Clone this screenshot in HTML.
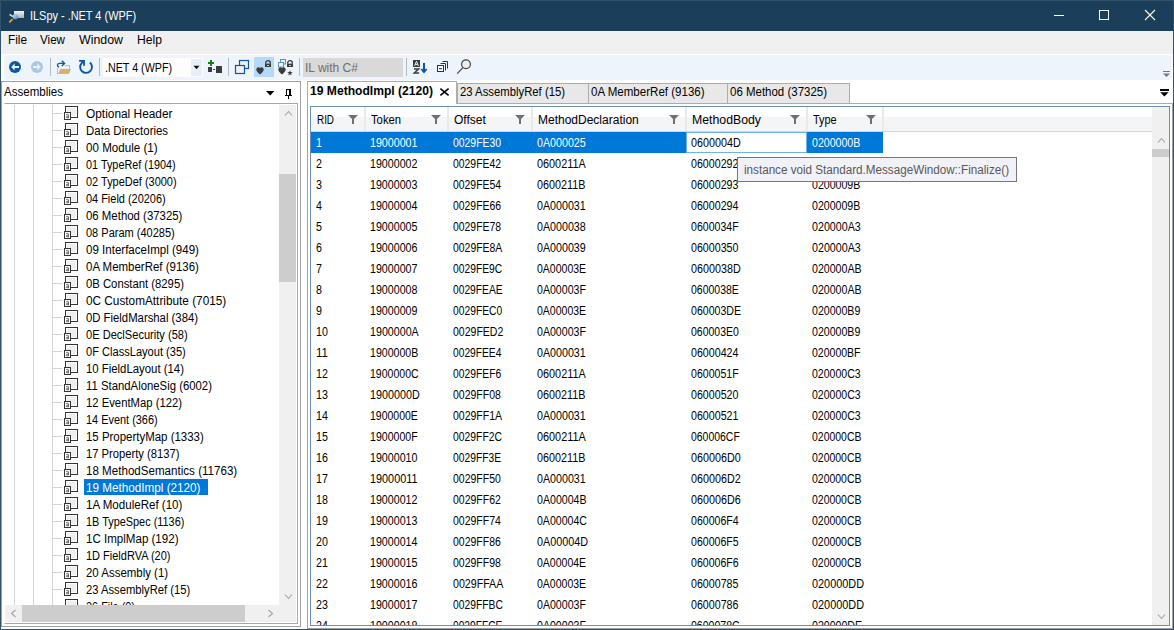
<!DOCTYPE html>
<html><head><meta charset="utf-8"><style>
html,body{margin:0;padding:0;width:1174px;height:630px;overflow:hidden;background:#fff;}
body{position:relative;font-family:"Liberation Sans",sans-serif;font-size:12px;}
.a{position:absolute;}
.t{white-space:pre;}
.ic{width:15px;height:14px;}
.ic i{position:absolute;left:1px;top:0;width:12px;height:11px;border:1px solid #222;box-sizing:border-box;background:#eeeef0;}
.ic b{position:absolute;left:0;top:6px;width:7px;height:8px;border:1px solid #222;box-sizing:border-box;background:#fff;}
</style></head><body>
<div class="a" style="left:0px;top:0px;width:1174px;height:31px;background:#1b3f5a;"></div>
<div class="a t" style="left:30px;top:7.84px;line-height:16px;color:#fff;transform:scaleX(0.9105);transform-origin:0 0;">ILSpy - .NET 4 (WPF)</div>
<div class="a" style="left:1054px;top:15px;width:10px;height:1px;background:#fff;"></div>
<div class="a" style="left:1099px;top:10px;width:10px;height:10px;border:1px solid #fff;box-sizing:border-box;"></div>
<svg class="a" style="left:1144px;top:9px" width="12" height="12"><path d="M1 1L11 11M11 1L1 11" stroke="#fff" stroke-width="1.1"/></svg>
<div class="a" style="left:1px;top:31px;width:1172px;height:23px;background:#f0f0f0;"></div>
<div class="a t" style="left:8px;top:31.84px;line-height:16px;color:#000;transform:scaleX(0.9822);transform-origin:0 0;">File</div>
<div class="a t" style="left:40px;top:31.84px;line-height:16px;color:#000;transform:scaleX(0.9691);transform-origin:0 0;">View</div>
<div class="a t" style="left:79px;top:31.84px;line-height:16px;color:#000;transform:scaleX(1.0307);transform-origin:0 0;">Window</div>
<div class="a t" style="left:137px;top:31.84px;line-height:16px;color:#000;transform:scaleX(1.0127);transform-origin:0 0;">Help</div>
<div class="a" style="left:4px;top:55px;width:1168px;height:25px;background:#eef4fc;border-radius:3px;"></div>
<svg class="a" style="left:8px;top:10px" width="18" height="14"><defs><linearGradient id="tg" x1="0" y1="0" x2="0" y2="1"><stop offset="0" stop-color="#f4f4f6"/><stop offset="1" stop-color="#a8adb6"/></linearGradient><linearGradient id="lg" x1="0" y1="0" x2="1" y2="1"><stop offset="0" stop-color="#b8e4fa"/><stop offset="1" stop-color="#5a84d0"/></linearGradient></defs><rect x="6" y="1" width="10" height="7" fill="url(#tg)"/><path d="M1.6 4.4L4.8 6.6" stroke="#e0e0e0" stroke-width="1.6"/><circle cx="7.4" cy="6.6" r="2.7" fill="url(#lg)"/><path d="M1.3 12.3L4.6 9.1" stroke="#f0a020" stroke-width="1.8"/></svg>
<div class="a" style="left:50px;top:58px;width:1px;height:18px;background:#b4bac2;"></div>
<div class="a" style="left:99px;top:58px;width:1px;height:18px;background:#b4bac2;"></div>
<div class="a" style="left:228px;top:58px;width:1px;height:18px;background:#b4bac2;"></div>
<div class="a" style="left:299px;top:58px;width:1px;height:18px;background:#b4bac2;"></div>
<div class="a" style="left:406px;top:58px;width:1px;height:18px;background:#b4bac2;"></div>
<svg class="a" style="left:8px;top:60px" width="14" height="14"><circle cx="7" cy="7" r="6" fill="#0c57a5"/><path d="M3.2 7L6.6 3.6V5.9H11V8.1H6.6V10.4Z" fill="#f2f2f2"/></svg>
<svg class="a" style="left:30px;top:60px" width="14" height="14"><circle cx="7" cy="7" r="6" fill="#a8c8e6"/><path d="M10.8 7L7.4 3.6V5.9H3V8.1H7.4V10.4Z" fill="#f2f2f2"/></svg>
<svg class="a" style="left:56px;top:59px" width="17" height="16"><rect x="1" y="9" width="1" height="6" fill="#dcb67a"/><rect x="9" y="6" width="5" height="1" fill="#dcb67a"/><rect x="13" y="6" width="1" height="4" fill="#dcb67a"/><rect x="2" y="7" width="11" height="3" fill="#f3f0ea"/><path d="M4.2 10H15L12.9 14.8H2.3Z" fill="#d9b070"/><rect x="1" y="14" width="12" height="1" fill="#dcb67a"/><path d="M2.9 8.2C0.9 7.6 0.8 4.6 3.6 4.4H8.6" stroke="#0e5aa8" stroke-width="1.4" fill="none"/><path d="M5.8 1.8L8.6 4.4L5.8 7.1" stroke="#0e5aa8" stroke-width="1.4" fill="none"/></svg>
<svg class="a" style="left:78px;top:59px" width="16" height="16"><path d="M11.9 3.5A5.9 5.9 0 1 1 3.9 3.8L5.6 2.3" stroke="#0c57a5" stroke-width="1.9" fill="none"/><path d="M1.1 1.9H6V6.8" stroke="#0c57a5" stroke-width="1.8" fill="none"/></svg>
<div class="a" style="left:103px;top:58px;width:100px;height:19px;background:#fdfdfe;"></div>
<div class="a" style="left:191px;top:59px;width:11px;height:17px;background:#e7eef7;"></div>
<svg class="a" style="left:193px;top:65px" width="7" height="5"><path d="M0.5 0.8H6.5L3.5 4.2Z" fill="#111"/></svg>
<div class="a t" style="left:105px;top:59.84px;line-height:16px;color:#000;transform:scaleX(0.8922);transform-origin:0 0;">.NET 4 (WPF)</div>
<svg class="a" style="left:207px;top:59px" width="16" height="15"><path d="M3 1H5V3H7V5H5V7H3V5H1V3H3Z" fill="#1a7d1a"/><rect x="1" y="8" width="4" height="5" fill="#3c3c3c"/><rect x="6" y="10" width="2" height="1" fill="#3c3c3c"/><rect x="9" y="7" width="6" height="7" fill="#3c3c3c"/></svg>
<svg class="a" style="left:234px;top:59px" width="16" height="16"><rect x="5.5" y="1.5" width="9" height="8" fill="#f0f0f0" stroke="#0c57a5" stroke-width="1.2"/><rect x="1.5" y="6.5" width="9" height="8" fill="#f0f0f0" stroke="#0c57a5" stroke-width="1.2"/></svg>
<div class="a" style="left:254px;top:57px;width:20px;height:20px;background:#b7d9f9;"></div>
<svg class="a" style="left:256px;top:67px" width="8" height="8"><path d="M4 7.5C2.6 6.3 0.3 4.9 0.3 2.6C0.3 1.3 1.2 0.3 2.3 0.3C3.1 0.3 3.7 0.8 4 1.3C4.3 0.8 4.9 0.3 5.7 0.3C6.8 0.3 7.7 1.3 7.7 2.6C7.7 4.9 5.4 6.3 4 7.5Z" fill="#3c3c3c"/></svg>
<svg class="a" style="left:264px;top:60px" width="8" height="8"><path d="M1.65 3.8V3A2.35 2.35 0 0 1 6.35 3V3.8" stroke="#3c3c3c" stroke-width="1.3" fill="none"/><rect x="1" y="3.6" width="6" height="3.4" fill="#3c3c3c"/><rect x="3" y="5.1" width="2" height="0.9" fill="#ddd"/></svg>
<svg class="a" style="left:278px;top:58px" width="9" height="10"><rect x="2.5" y="1.5" width="5" height="4.5" fill="#e8eef6" stroke="#5b93c7"/><rect x="0.5" y="4.5" width="5" height="4.5" fill="#f4f4f4" stroke="#5b93c7"/></svg>
<svg class="a" style="left:278px;top:67px" width="8" height="8"><path d="M4 7.5C2.6 6.3 0.3 4.9 0.3 2.6C0.3 1.3 1.2 0.3 2.3 0.3C3.1 0.3 3.7 0.8 4 1.3C4.3 0.8 4.9 0.3 5.7 0.3C6.8 0.3 7.7 1.3 7.7 2.6C7.7 4.9 5.4 6.3 4 7.5Z" fill="#3c3c3c"/></svg>
<svg class="a" style="left:286px;top:60px" width="8" height="8"><path d="M1.65 3.8V3A2.35 2.35 0 0 1 6.35 3V3.8" stroke="#3c3c3c" stroke-width="1.3" fill="none"/><rect x="1" y="3.6" width="6" height="3.4" fill="#3c3c3c"/><rect x="3" y="5.1" width="2" height="0.9" fill="#ddd"/></svg>
<svg class="a" style="left:287px;top:69.5px" width="6" height="6"><path d="M3 0.2L3.7 2.1H5.8L4.1 3.3L4.7 5.4L3 4.2L1.3 5.4L1.9 3.3L0.2 2.1H2.3Z" fill="#3c3c3c"/></svg>
<div class="a" style="left:303px;top:58px;width:100px;height:19px;background:#d9d9d9;"></div>
<div class="a t" style="left:305px;top:59.84px;line-height:16px;color:#6e6e6e;">IL with C#</div>
<svg class="a" style="left:412px;top:59px" width="17" height="16"><rect x="1" y="1" width="7" height="7" fill="#3c3c3c"/><path d="M2.6 7L4.5 2.2L6.4 7M3.2 5.4H5.8" stroke="#eee" stroke-width="1" fill="none"/><path d="M2 10.1H6.6L2.3 14H7.1" stroke="#3c3c3c" stroke-width="1.5" fill="none"/><path d="M12 4V13" stroke="#0c57a5" stroke-width="2"/><path d="M9.3 10L12 13.2L14.7 10" stroke="#0c57a5" stroke-width="1.8" fill="none"/></svg>
<svg class="a" style="left:436px;top:60px" width="14" height="13"><path d="M6.5 1.5H11.5V8.5" stroke="#333" stroke-width="1" fill="none"/><path d="M4.5 3.5H9.5V10.5" stroke="#333" stroke-width="1" fill="none"/><rect x="1.5" y="5.5" width="6" height="6" fill="#fff" stroke="#333"/><rect x="3" y="8" width="3" height="1.2" fill="#0c57a5"/></svg>
<svg class="a" style="left:456px;top:59px" width="16" height="16"><circle cx="10" cy="5.3" r="4.4" fill="#eeeeee" stroke="#444" stroke-width="1.2"/><path d="M1.2 14.6L6.9 8.6" stroke="#444" stroke-width="1.2"/></svg>
<div class="a" style="left:1px;top:81px;width:300px;height:546px;border:1px solid #a0a0a0;box-sizing:border-box;"></div>
<div class="a t" style="left:4px;top:83.84px;line-height:16px;color:#000;transform:scaleX(0.9615);transform-origin:0 0;">Assemblies</div>
<div class="a" style="left:4px;top:103px;width:294px;height:521px;background:#fff;border:1px solid #a3a7ae;border-left-color:#fff;box-sizing:border-box;"></div>
<div class="a" style="left:307px;top:103px;width:866px;height:526px;border:1px solid #a0a0a0;box-sizing:border-box;"></div>
<div class="a" style="left:310px;top:106px;width:860px;height:520px;background:#fff;border:1px solid #6b8cb0;box-sizing:border-box;"></div>
<div class="a" style="left:457px;top:83px;width:132px;height:21px;background:#e8e8e8;border:1px solid #acacac;border-bottom:none;box-sizing:border-box;"></div>
<div class="a" style="left:588px;top:83px;width:140px;height:21px;background:#e8e8e8;border:1px solid #acacac;border-bottom:none;box-sizing:border-box;"></div>
<div class="a" style="left:727px;top:83px;width:123px;height:21px;background:#e8e8e8;border:1px solid #acacac;border-bottom:none;box-sizing:border-box;"></div>
<div class="a t" style="left:460px;top:83.84px;line-height:16px;color:#000;transform:scaleX(0.9428);transform-origin:0 0;">23 AssemblyRef (15)</div>
<div class="a t" style="left:591px;top:83.84px;line-height:16px;color:#000;transform:scaleX(0.9623);transform-origin:0 0;">0A MemberRef (9136)</div>
<div class="a t" style="left:730px;top:83.84px;line-height:16px;color:#000;transform:scaleX(0.9568);transform-origin:0 0;">06 Method (37325)</div>
<div class="a" style="left:457px;top:103px;width:716px;height:1px;background:#acacac;"></div>
<div class="a" style="left:307px;top:81px;width:150px;height:23px;background:#fff;border:1px solid #acacac;border-bottom:none;box-sizing:border-box;"></div>
<div class="a t" style="left:310.3px;top:82.84px;line-height:16px;color:#000;font-weight:bold;transform:scaleX(1.0082);transform-origin:0 0;">19 MethodImpl (2120)</div>
<svg class="a" style="left:439px;top:87px" width="11" height="10"><path d="M1.4 1.6L9.6 8.4M9.6 1.6L1.4 8.4" stroke="#000" stroke-width="1.6"/></svg>
<div class="a" style="left:311px;top:107px;width:841px;height:10px;background:#ffffff;"></div>
<div class="a" style="left:311px;top:117px;width:841px;height:14px;background:#f4f5f7;"></div>
<div class="a" style="left:311px;top:131px;width:841px;height:1px;background:#d5d5d5;"></div>
<div class="a" style="left:364px;top:107px;width:2px;height:24px;background:#e9e9e9;"></div>
<div class="a t" style="left:317px;top:111.84px;line-height:16px;color:#000;transform:scaleX(0.8224);transform-origin:0 0;">RID</div>
<svg class="a" style="left:348px;top:115px" width="10" height="9"><path d="M0 0H10L6 4V9H4V4Z" fill="#707070"/></svg>
<div class="a" style="left:447px;top:107px;width:2px;height:24px;background:#e9e9e9;"></div>
<div class="a t" style="left:371px;top:111.84px;line-height:16px;color:#000;transform:scaleX(0.9370);transform-origin:0 0;">Token</div>
<svg class="a" style="left:431px;top:115px" width="10" height="9"><path d="M0 0H10L6 4V9H4V4Z" fill="#707070"/></svg>
<div class="a" style="left:531px;top:107px;width:2px;height:24px;background:#e9e9e9;"></div>
<div class="a t" style="left:454px;top:111.84px;line-height:16px;color:#000;">Offset</div>
<svg class="a" style="left:515px;top:115px" width="10" height="9"><path d="M0 0H10L6 4V9H4V4Z" fill="#707070"/></svg>
<div class="a" style="left:685px;top:107px;width:2px;height:24px;background:#e9e9e9;"></div>
<div class="a t" style="left:538px;top:111.84px;line-height:16px;color:#000;">MethodDeclaration</div>
<svg class="a" style="left:669px;top:115px" width="10" height="9"><path d="M0 0H10L6 4V9H4V4Z" fill="#707070"/></svg>
<div class="a" style="left:806px;top:107px;width:2px;height:24px;background:#e9e9e9;"></div>
<div class="a t" style="left:692px;top:111.84px;line-height:16px;color:#000;transform:scaleX(1.0244);transform-origin:0 0;">MethodBody</div>
<svg class="a" style="left:790px;top:115px" width="10" height="9"><path d="M0 0H10L6 4V9H4V4Z" fill="#707070"/></svg>
<div class="a" style="left:882px;top:107px;width:2px;height:24px;background:#e9e9e9;"></div>
<div class="a t" style="left:813px;top:111.84px;line-height:16px;color:#000;transform:scaleX(0.9071);transform-origin:0 0;">Type</div>
<svg class="a" style="left:866px;top:115px" width="10" height="9"><path d="M0 0H10L6 4V9H4V4Z" fill="#707070"/></svg>
<div class="a" style="left:311px;top:132px;width:841px;height:493px;overflow:hidden">
<div class="a" style="left:0px;top:0px;width:375px;height:21px;background:#0078d7;"></div>
<div class="a" style="left:375px;top:0px;width:121px;height:21px;background:#fff;border:1px solid #6fb2ec;box-sizing:border-box;"></div>
<div class="a" style="left:496px;top:0px;width:76px;height:21px;background:#0078d7;"></div>
<div class="a t" style="left:4.5px;top:2.84px;line-height:16px;color:#fff;transform:scaleX(0.8888);transform-origin:0 0;">1</div>
<div class="a t" style="left:59.30000000000001px;top:2.84px;line-height:16px;color:#fff;transform:scaleX(0.8888);transform-origin:0 0;">19000001</div>
<div class="a t" style="left:142px;top:2.84px;line-height:16px;color:#fff;transform:scaleX(0.8667);transform-origin:0 0;">0029FE30</div>
<div class="a t" style="left:225.5px;top:2.84px;line-height:16px;color:#fff;transform:scaleX(0.8904);transform-origin:0 0;">0A000025</div>
<div class="a t" style="left:380px;top:2.84px;line-height:16px;color:#000;transform:scaleX(0.8977);transform-origin:0 0;">0600004D</div>
<div class="a t" style="left:501px;top:2.84px;line-height:16px;color:#fff;transform:scaleX(0.8831);transform-origin:0 0;">0200000B</div>
<div class="a t" style="left:4.5px;top:23.84px;line-height:16px;color:#000;transform:scaleX(0.8888);transform-origin:0 0;">2</div>
<div class="a t" style="left:59.30000000000001px;top:23.84px;line-height:16px;color:#000;transform:scaleX(0.8888);transform-origin:0 0;">19000002</div>
<div class="a t" style="left:142px;top:23.84px;line-height:16px;color:#000;transform:scaleX(0.8667);transform-origin:0 0;">0029FE42</div>
<div class="a t" style="left:225.5px;top:23.84px;line-height:16px;color:#000;transform:scaleX(0.9052);transform-origin:0 0;">0600211A</div>
<div class="a t" style="left:380px;top:23.84px;line-height:16px;color:#000;transform:scaleX(0.8888);transform-origin:0 0;">06000292</div>
<div class="a t" style="left:501px;top:23.84px;line-height:16px;color:#000;transform:scaleX(0.8831);transform-origin:0 0;">0200009B</div>
<div class="a t" style="left:4.5px;top:44.84px;line-height:16px;color:#000;transform:scaleX(0.8888);transform-origin:0 0;">3</div>
<div class="a t" style="left:59.30000000000001px;top:44.84px;line-height:16px;color:#000;transform:scaleX(0.8888);transform-origin:0 0;">19000003</div>
<div class="a t" style="left:142px;top:44.84px;line-height:16px;color:#000;transform:scaleX(0.8667);transform-origin:0 0;">0029FE54</div>
<div class="a t" style="left:225.5px;top:44.84px;line-height:16px;color:#000;transform:scaleX(0.8977);transform-origin:0 0;">0600211B</div>
<div class="a t" style="left:380px;top:44.84px;line-height:16px;color:#000;transform:scaleX(0.8888);transform-origin:0 0;">06000293</div>
<div class="a t" style="left:501px;top:44.84px;line-height:16px;color:#000;transform:scaleX(0.8831);transform-origin:0 0;">0200009B</div>
<div class="a t" style="left:4.5px;top:65.84px;line-height:16px;color:#000;transform:scaleX(0.8888);transform-origin:0 0;">4</div>
<div class="a t" style="left:59.30000000000001px;top:65.84px;line-height:16px;color:#000;transform:scaleX(0.8888);transform-origin:0 0;">19000004</div>
<div class="a t" style="left:142px;top:65.84px;line-height:16px;color:#000;transform:scaleX(0.8667);transform-origin:0 0;">0029FE66</div>
<div class="a t" style="left:225.5px;top:65.84px;line-height:16px;color:#000;transform:scaleX(0.8904);transform-origin:0 0;">0A000031</div>
<div class="a t" style="left:380px;top:65.84px;line-height:16px;color:#000;transform:scaleX(0.8888);transform-origin:0 0;">06000294</div>
<div class="a t" style="left:501px;top:65.84px;line-height:16px;color:#000;transform:scaleX(0.8831);transform-origin:0 0;">0200009B</div>
<div class="a t" style="left:4.5px;top:86.84px;line-height:16px;color:#000;transform:scaleX(0.8888);transform-origin:0 0;">5</div>
<div class="a t" style="left:59.30000000000001px;top:86.84px;line-height:16px;color:#000;transform:scaleX(0.8888);transform-origin:0 0;">19000005</div>
<div class="a t" style="left:142px;top:86.84px;line-height:16px;color:#000;transform:scaleX(0.8667);transform-origin:0 0;">0029FE78</div>
<div class="a t" style="left:225.5px;top:86.84px;line-height:16px;color:#000;transform:scaleX(0.8904);transform-origin:0 0;">0A000038</div>
<div class="a t" style="left:380px;top:86.84px;line-height:16px;color:#000;transform:scaleX(0.8812);transform-origin:0 0;">0600034F</div>
<div class="a t" style="left:501px;top:86.84px;line-height:16px;color:#000;transform:scaleX(0.8904);transform-origin:0 0;">020000A3</div>
<div class="a t" style="left:4.5px;top:107.84px;line-height:16px;color:#000;transform:scaleX(0.8888);transform-origin:0 0;">6</div>
<div class="a t" style="left:59.30000000000001px;top:107.84px;line-height:16px;color:#000;transform:scaleX(0.8888);transform-origin:0 0;">19000006</div>
<div class="a t" style="left:142px;top:107.84px;line-height:16px;color:#000;transform:scaleX(0.8688);transform-origin:0 0;">0029FE8A</div>
<div class="a t" style="left:225.5px;top:107.84px;line-height:16px;color:#000;transform:scaleX(0.8904);transform-origin:0 0;">0A000039</div>
<div class="a t" style="left:380px;top:107.84px;line-height:16px;color:#000;transform:scaleX(0.8888);transform-origin:0 0;">06000350</div>
<div class="a t" style="left:501px;top:107.84px;line-height:16px;color:#000;transform:scaleX(0.8904);transform-origin:0 0;">020000A3</div>
<div class="a t" style="left:4.5px;top:128.84px;line-height:16px;color:#000;transform:scaleX(0.8888);transform-origin:0 0;">7</div>
<div class="a t" style="left:59.30000000000001px;top:128.84px;line-height:16px;color:#000;transform:scaleX(0.8888);transform-origin:0 0;">19000007</div>
<div class="a t" style="left:142px;top:128.84px;line-height:16px;color:#000;transform:scaleX(0.8569);transform-origin:0 0;">0029FE9C</div>
<div class="a t" style="left:225.5px;top:128.84px;line-height:16px;color:#000;transform:scaleX(0.8759);transform-origin:0 0;">0A00003E</div>
<div class="a t" style="left:380px;top:128.84px;line-height:16px;color:#000;transform:scaleX(0.8977);transform-origin:0 0;">0600038D</div>
<div class="a t" style="left:501px;top:128.84px;line-height:16px;color:#000;transform:scaleX(0.8849);transform-origin:0 0;">020000AB</div>
<div class="a t" style="left:4.5px;top:149.84px;line-height:16px;color:#000;transform:scaleX(0.8888);transform-origin:0 0;">8</div>
<div class="a t" style="left:59.30000000000001px;top:149.84px;line-height:16px;color:#000;transform:scaleX(0.8888);transform-origin:0 0;">19000008</div>
<div class="a t" style="left:142px;top:149.84px;line-height:16px;color:#000;transform:scaleX(0.8553);transform-origin:0 0;">0029FEAE</div>
<div class="a t" style="left:225.5px;top:149.84px;line-height:16px;color:#000;transform:scaleX(0.8830);transform-origin:0 0;">0A00003F</div>
<div class="a t" style="left:380px;top:149.84px;line-height:16px;color:#000;transform:scaleX(0.8740);transform-origin:0 0;">0600038E</div>
<div class="a t" style="left:501px;top:149.84px;line-height:16px;color:#000;transform:scaleX(0.8849);transform-origin:0 0;">020000AB</div>
<div class="a t" style="left:4.5px;top:170.84px;line-height:16px;color:#000;transform:scaleX(0.8888);transform-origin:0 0;">9</div>
<div class="a t" style="left:59.30000000000001px;top:170.84px;line-height:16px;color:#000;transform:scaleX(0.8888);transform-origin:0 0;">19000009</div>
<div class="a t" style="left:142px;top:170.84px;line-height:16px;color:#000;transform:scaleX(0.8569);transform-origin:0 0;">0029FEC0</div>
<div class="a t" style="left:225.5px;top:170.84px;line-height:16px;color:#000;transform:scaleX(0.8759);transform-origin:0 0;">0A00003E</div>
<div class="a t" style="left:380px;top:170.84px;line-height:16px;color:#000;transform:scaleX(0.8832);transform-origin:0 0;">060003DE</div>
<div class="a t" style="left:501px;top:170.84px;line-height:16px;color:#000;transform:scaleX(0.8831);transform-origin:0 0;">020000B9</div>
<div class="a t" style="left:4.5px;top:191.84px;line-height:16px;color:#000;transform:scaleX(0.8888);transform-origin:0 0;">10</div>
<div class="a t" style="left:59.30000000000001px;top:191.84px;line-height:16px;color:#000;transform:scaleX(0.8904);transform-origin:0 0;">1900000A</div>
<div class="a t" style="left:142px;top:191.84px;line-height:16px;color:#000;transform:scaleX(0.8761);transform-origin:0 0;">0029FED2</div>
<div class="a t" style="left:225.5px;top:191.84px;line-height:16px;color:#000;transform:scaleX(0.8830);transform-origin:0 0;">0A00003F</div>
<div class="a t" style="left:380px;top:191.84px;line-height:16px;color:#000;transform:scaleX(0.8740);transform-origin:0 0;">060003E0</div>
<div class="a t" style="left:501px;top:191.84px;line-height:16px;color:#000;transform:scaleX(0.8831);transform-origin:0 0;">020000B9</div>
<div class="a t" style="left:4.5px;top:212.84px;line-height:16px;color:#000;transform:scaleX(0.9524);transform-origin:0 0;">11</div>
<div class="a t" style="left:59.30000000000001px;top:212.84px;line-height:16px;color:#000;transform:scaleX(0.8831);transform-origin:0 0;">1900000B</div>
<div class="a t" style="left:142px;top:212.84px;line-height:16px;color:#000;transform:scaleX(0.8529);transform-origin:0 0;">0029FEE4</div>
<div class="a t" style="left:225.5px;top:212.84px;line-height:16px;color:#000;transform:scaleX(0.8904);transform-origin:0 0;">0A000031</div>
<div class="a t" style="left:380px;top:212.84px;line-height:16px;color:#000;transform:scaleX(0.8888);transform-origin:0 0;">06000424</div>
<div class="a t" style="left:501px;top:212.84px;line-height:16px;color:#000;transform:scaleX(0.8757);transform-origin:0 0;">020000BF</div>
<div class="a t" style="left:4.5px;top:233.84px;line-height:16px;color:#000;transform:scaleX(0.8888);transform-origin:0 0;">12</div>
<div class="a t" style="left:59.30000000000001px;top:233.84px;line-height:16px;color:#000;transform:scaleX(0.8778);transform-origin:0 0;">1900000C</div>
<div class="a t" style="left:142px;top:233.84px;line-height:16px;color:#000;transform:scaleX(0.8596);transform-origin:0 0;">0029FEF6</div>
<div class="a t" style="left:225.5px;top:233.84px;line-height:16px;color:#000;transform:scaleX(0.9052);transform-origin:0 0;">0600211A</div>
<div class="a t" style="left:380px;top:233.84px;line-height:16px;color:#000;transform:scaleX(0.8812);transform-origin:0 0;">0600051F</div>
<div class="a t" style="left:501px;top:233.84px;line-height:16px;color:#000;transform:scaleX(0.8778);transform-origin:0 0;">020000C3</div>
<div class="a t" style="left:4.5px;top:254.84px;line-height:16px;color:#000;transform:scaleX(0.8888);transform-origin:0 0;">13</div>
<div class="a t" style="left:59.30000000000001px;top:254.84px;line-height:16px;color:#000;transform:scaleX(0.8977);transform-origin:0 0;">1900000D</div>
<div class="a t" style="left:142px;top:254.84px;line-height:16px;color:#000;transform:scaleX(0.8737);transform-origin:0 0;">0029FF08</div>
<div class="a t" style="left:225.5px;top:254.84px;line-height:16px;color:#000;transform:scaleX(0.8977);transform-origin:0 0;">0600211B</div>
<div class="a t" style="left:380px;top:254.84px;line-height:16px;color:#000;transform:scaleX(0.8888);transform-origin:0 0;">06000520</div>
<div class="a t" style="left:501px;top:254.84px;line-height:16px;color:#000;transform:scaleX(0.8778);transform-origin:0 0;">020000C3</div>
<div class="a t" style="left:4.5px;top:275.84px;line-height:16px;color:#000;transform:scaleX(0.8888);transform-origin:0 0;">14</div>
<div class="a t" style="left:59.30000000000001px;top:275.84px;line-height:16px;color:#000;transform:scaleX(0.8740);transform-origin:0 0;">1900000E</div>
<div class="a t" style="left:142px;top:275.84px;line-height:16px;color:#000;transform:scaleX(0.8756);transform-origin:0 0;">0029FF1A</div>
<div class="a t" style="left:225.5px;top:275.84px;line-height:16px;color:#000;transform:scaleX(0.8904);transform-origin:0 0;">0A000031</div>
<div class="a t" style="left:380px;top:275.84px;line-height:16px;color:#000;transform:scaleX(0.8888);transform-origin:0 0;">06000521</div>
<div class="a t" style="left:501px;top:275.84px;line-height:16px;color:#000;transform:scaleX(0.8778);transform-origin:0 0;">020000C3</div>
<div class="a t" style="left:4.5px;top:296.84px;line-height:16px;color:#000;transform:scaleX(0.8888);transform-origin:0 0;">15</div>
<div class="a t" style="left:59.30000000000001px;top:296.84px;line-height:16px;color:#000;transform:scaleX(0.8812);transform-origin:0 0;">1900000F</div>
<div class="a t" style="left:142px;top:296.84px;line-height:16px;color:#000;transform:scaleX(0.8635);transform-origin:0 0;">0029FF2C</div>
<div class="a t" style="left:225.5px;top:296.84px;line-height:16px;color:#000;transform:scaleX(0.9052);transform-origin:0 0;">0600211A</div>
<div class="a t" style="left:380px;top:296.84px;line-height:16px;color:#000;transform:scaleX(0.8706);transform-origin:0 0;">060006CF</div>
<div class="a t" style="left:501px;top:296.84px;line-height:16px;color:#000;transform:scaleX(0.8726);transform-origin:0 0;">020000CB</div>
<div class="a t" style="left:4.5px;top:317.84px;line-height:16px;color:#000;transform:scaleX(0.8888);transform-origin:0 0;">16</div>
<div class="a t" style="left:59.30000000000001px;top:317.84px;line-height:16px;color:#000;transform:scaleX(0.8888);transform-origin:0 0;">19000010</div>
<div class="a t" style="left:142px;top:317.84px;line-height:16px;color:#000;transform:scaleX(0.8596);transform-origin:0 0;">0029FF3E</div>
<div class="a t" style="left:225.5px;top:317.84px;line-height:16px;color:#000;transform:scaleX(0.8977);transform-origin:0 0;">0600211B</div>
<div class="a t" style="left:380px;top:317.84px;line-height:16px;color:#000;transform:scaleX(0.8977);transform-origin:0 0;">060006D0</div>
<div class="a t" style="left:501px;top:317.84px;line-height:16px;color:#000;transform:scaleX(0.8726);transform-origin:0 0;">020000CB</div>
<div class="a t" style="left:4.5px;top:338.84px;line-height:16px;color:#000;transform:scaleX(0.8888);transform-origin:0 0;">17</div>
<div class="a t" style="left:59.30000000000001px;top:338.84px;line-height:16px;color:#000;transform:scaleX(0.9039);transform-origin:0 0;">19000011</div>
<div class="a t" style="left:142px;top:338.84px;line-height:16px;color:#000;transform:scaleX(0.8737);transform-origin:0 0;">0029FF50</div>
<div class="a t" style="left:225.5px;top:338.84px;line-height:16px;color:#000;transform:scaleX(0.8904);transform-origin:0 0;">0A000031</div>
<div class="a t" style="left:380px;top:338.84px;line-height:16px;color:#000;transform:scaleX(0.8977);transform-origin:0 0;">060006D2</div>
<div class="a t" style="left:501px;top:338.84px;line-height:16px;color:#000;transform:scaleX(0.8726);transform-origin:0 0;">020000CB</div>
<div class="a t" style="left:4.5px;top:359.84px;line-height:16px;color:#000;transform:scaleX(0.8888);transform-origin:0 0;">18</div>
<div class="a t" style="left:59.30000000000001px;top:359.84px;line-height:16px;color:#000;transform:scaleX(0.8888);transform-origin:0 0;">19000012</div>
<div class="a t" style="left:142px;top:359.84px;line-height:16px;color:#000;transform:scaleX(0.8737);transform-origin:0 0;">0029FF62</div>
<div class="a t" style="left:225.5px;top:359.84px;line-height:16px;color:#000;transform:scaleX(0.8849);transform-origin:0 0;">0A00004B</div>
<div class="a t" style="left:380px;top:359.84px;line-height:16px;color:#000;transform:scaleX(0.8977);transform-origin:0 0;">060006D6</div>
<div class="a t" style="left:501px;top:359.84px;line-height:16px;color:#000;transform:scaleX(0.8726);transform-origin:0 0;">020000CB</div>
<div class="a t" style="left:4.5px;top:380.84px;line-height:16px;color:#000;transform:scaleX(0.8888);transform-origin:0 0;">19</div>
<div class="a t" style="left:59.30000000000001px;top:380.84px;line-height:16px;color:#000;transform:scaleX(0.8888);transform-origin:0 0;">19000013</div>
<div class="a t" style="left:142px;top:380.84px;line-height:16px;color:#000;transform:scaleX(0.8737);transform-origin:0 0;">0029FF74</div>
<div class="a t" style="left:225.5px;top:380.84px;line-height:16px;color:#000;transform:scaleX(0.8797);transform-origin:0 0;">0A00004C</div>
<div class="a t" style="left:380px;top:380.84px;line-height:16px;color:#000;transform:scaleX(0.8812);transform-origin:0 0;">060006F4</div>
<div class="a t" style="left:501px;top:380.84px;line-height:16px;color:#000;transform:scaleX(0.8726);transform-origin:0 0;">020000CB</div>
<div class="a t" style="left:4.5px;top:401.84px;line-height:16px;color:#000;transform:scaleX(0.8888);transform-origin:0 0;">20</div>
<div class="a t" style="left:59.30000000000001px;top:401.84px;line-height:16px;color:#000;transform:scaleX(0.8888);transform-origin:0 0;">19000014</div>
<div class="a t" style="left:142px;top:401.84px;line-height:16px;color:#000;transform:scaleX(0.8737);transform-origin:0 0;">0029FF86</div>
<div class="a t" style="left:225.5px;top:401.84px;line-height:16px;color:#000;transform:scaleX(0.8991);transform-origin:0 0;">0A00004D</div>
<div class="a t" style="left:380px;top:401.84px;line-height:16px;color:#000;transform:scaleX(0.8812);transform-origin:0 0;">060006F5</div>
<div class="a t" style="left:501px;top:401.84px;line-height:16px;color:#000;transform:scaleX(0.8726);transform-origin:0 0;">020000CB</div>
<div class="a t" style="left:4.5px;top:422.84px;line-height:16px;color:#000;transform:scaleX(0.8888);transform-origin:0 0;">21</div>
<div class="a t" style="left:59.30000000000001px;top:422.84px;line-height:16px;color:#000;transform:scaleX(0.8888);transform-origin:0 0;">19000015</div>
<div class="a t" style="left:142px;top:422.84px;line-height:16px;color:#000;transform:scaleX(0.8737);transform-origin:0 0;">0029FF98</div>
<div class="a t" style="left:225.5px;top:422.84px;line-height:16px;color:#000;transform:scaleX(0.8759);transform-origin:0 0;">0A00004E</div>
<div class="a t" style="left:380px;top:422.84px;line-height:16px;color:#000;transform:scaleX(0.8812);transform-origin:0 0;">060006F6</div>
<div class="a t" style="left:501px;top:422.84px;line-height:16px;color:#000;transform:scaleX(0.8726);transform-origin:0 0;">020000CB</div>
<div class="a t" style="left:4.5px;top:443.84px;line-height:16px;color:#000;transform:scaleX(0.8888);transform-origin:0 0;">22</div>
<div class="a t" style="left:59.30000000000001px;top:443.84px;line-height:16px;color:#000;transform:scaleX(0.8888);transform-origin:0 0;">19000016</div>
<div class="a t" style="left:142px;top:443.84px;line-height:16px;color:#000;transform:scaleX(0.8877);transform-origin:0 0;">0029FFAA</div>
<div class="a t" style="left:225.5px;top:443.84px;line-height:16px;color:#000;transform:scaleX(0.8759);transform-origin:0 0;">0A00003E</div>
<div class="a t" style="left:380px;top:443.84px;line-height:16px;color:#000;transform:scaleX(0.8888);transform-origin:0 0;">06000785</div>
<div class="a t" style="left:501px;top:443.84px;line-height:16px;color:#000;transform:scaleX(0.9060);transform-origin:0 0;">020000DD</div>
<div class="a t" style="left:4.5px;top:464.84px;line-height:16px;color:#000;transform:scaleX(0.8888);transform-origin:0 0;">23</div>
<div class="a t" style="left:59.30000000000001px;top:464.84px;line-height:16px;color:#000;transform:scaleX(0.8888);transform-origin:0 0;">19000017</div>
<div class="a t" style="left:142px;top:464.84px;line-height:16px;color:#000;transform:scaleX(0.8587);transform-origin:0 0;">0029FFBC</div>
<div class="a t" style="left:225.5px;top:464.84px;line-height:16px;color:#000;transform:scaleX(0.8830);transform-origin:0 0;">0A00003F</div>
<div class="a t" style="left:380px;top:464.84px;line-height:16px;color:#000;transform:scaleX(0.8888);transform-origin:0 0;">06000786</div>
<div class="a t" style="left:501px;top:464.84px;line-height:16px;color:#000;transform:scaleX(0.9060);transform-origin:0 0;">020000DD</div>
<div class="a t" style="left:4.5px;top:485.84px;line-height:16px;color:#000;transform:scaleX(0.8888);transform-origin:0 0;">24</div>
<div class="a t" style="left:59.30000000000001px;top:485.84px;line-height:16px;color:#000;transform:scaleX(0.8888);transform-origin:0 0;">19000018</div>
<div class="a t" style="left:142px;top:485.84px;line-height:16px;color:#000;transform:scaleX(0.8501);transform-origin:0 0;">0029FFCE</div>
<div class="a t" style="left:225.5px;top:485.84px;line-height:16px;color:#000;transform:scaleX(0.8830);transform-origin:0 0;">0A00003F</div>
<div class="a t" style="left:380px;top:485.84px;line-height:16px;color:#000;transform:scaleX(0.8778);transform-origin:0 0;">0600078C</div>
<div class="a t" style="left:501px;top:485.84px;line-height:16px;color:#000;transform:scaleX(0.8832);transform-origin:0 0;">020000DE</div>
</div>
<div class="a" style="left:1152px;top:107px;width:17px;height:518px;background:#f0f0f0;"></div>
<div class="a" style="left:1152px;top:149px;width:17px;height:8px;background:#cdcdcd;"></div>
<svg class="a" style="left:1157px;top:137px" width="9" height="7"><path d="M1 5.5L4.5 1.5L8 5.5" stroke="#a3a3a3" stroke-width="1.1" fill="none"/></svg>
<svg class="a" style="left:1157px;top:613px" width="9" height="7"><path d="M1 1.5L4.5 5.5L8 1.5" stroke="#a3a3a3" stroke-width="1.1" fill="none"/></svg>
<div class="a" style="left:737px;top:157px;width:280px;height:25px;background:#f1f2f7;border:1px solid #767676;box-sizing:border-box;"></div>
<div class="a t" style="left:744px;top:161.84px;line-height:16px;color:#575757;transform:scaleX(0.9715);transform-origin:0 0;">instance void Standard.MessageWindow::Finalize()</div>
<div class="a" style="left:5px;top:104px;width:274px;height:501px;overflow:hidden">
<div class="a" style="left:9px;top:1px;width:1px;height:500px;background:#d4d4d4;"></div>
<div class="a" style="left:28px;top:1px;width:1px;height:500px;background:#d4d4d4;"></div>
<div class="a" style="left:47px;top:1px;width:1px;height:500px;background:#d4d4d4;"></div>
<div class="a" style="left:47px;top:9px;width:10px;height:1px;background:#d4d4d4;"></div>
<svg class="a" style="left:59px;top:2px" width="14" height="14"><rect x="1.5" y="0.5" width="12" height="11" fill="#fff" stroke="#333"/><rect x="3" y="2" width="9" height="8" fill="#eeeef2"/><rect x="0.5" y="6.5" width="6" height="7" fill="#fff" stroke="#333"/><path d="M2.2 8.6Q3.6 8.0 4.4 8.7V12.2M4.4 10.2Q2.2 9.9 2.2 11.2Q2.4 12.4 4.4 11.6" stroke="#444" stroke-width="0.8" fill="none"/></svg>
<div class="a t" style="left:80.8px;top:1.84px;line-height:16px;color:#000;transform:scaleX(0.9900);transform-origin:0 0;">Optional Header</div>
<div class="a" style="left:47px;top:26px;width:10px;height:1px;background:#d4d4d4;"></div>
<svg class="a" style="left:59px;top:19px" width="14" height="14"><rect x="1.5" y="0.5" width="12" height="11" fill="#fff" stroke="#333"/><rect x="3" y="2" width="9" height="8" fill="#eeeef2"/><rect x="0.5" y="6.5" width="6" height="7" fill="#fff" stroke="#333"/><path d="M2.2 8.6Q3.6 8.0 4.4 8.7V12.2M4.4 10.2Q2.2 9.9 2.2 11.2Q2.4 12.4 4.4 11.6" stroke="#444" stroke-width="0.8" fill="none"/></svg>
<div class="a t" style="left:80.8px;top:18.84px;line-height:16px;color:#000;transform:scaleX(0.9543);transform-origin:0 0;">Data Directories</div>
<div class="a" style="left:47px;top:43px;width:10px;height:1px;background:#d4d4d4;"></div>
<svg class="a" style="left:59px;top:36px" width="14" height="14"><rect x="1.5" y="0.5" width="12" height="11" fill="#fff" stroke="#333"/><rect x="3" y="2" width="9" height="8" fill="#eeeef2"/><rect x="0.5" y="6.5" width="6" height="7" fill="#fff" stroke="#333"/><path d="M2.2 8.6Q3.6 8.0 4.4 8.7V12.2M4.4 10.2Q2.2 9.9 2.2 11.2Q2.4 12.4 4.4 11.6" stroke="#444" stroke-width="0.8" fill="none"/></svg>
<div class="a t" style="left:80.8px;top:35.84px;line-height:16px;color:#000;transform:scaleX(0.9672);transform-origin:0 0;">00 Module (1)</div>
<div class="a" style="left:47px;top:60px;width:10px;height:1px;background:#d4d4d4;"></div>
<svg class="a" style="left:59px;top:53px" width="14" height="14"><rect x="1.5" y="0.5" width="12" height="11" fill="#fff" stroke="#333"/><rect x="3" y="2" width="9" height="8" fill="#eeeef2"/><rect x="0.5" y="6.5" width="6" height="7" fill="#fff" stroke="#333"/><path d="M2.2 8.6Q3.6 8.0 4.4 8.7V12.2M4.4 10.2Q2.2 9.9 2.2 11.2Q2.4 12.4 4.4 11.6" stroke="#444" stroke-width="0.8" fill="none"/></svg>
<div class="a t" style="left:80.8px;top:52.84px;line-height:16px;color:#000;transform:scaleX(0.9046);transform-origin:0 0;">01 TypeRef (1904)</div>
<div class="a" style="left:47px;top:77px;width:10px;height:1px;background:#d4d4d4;"></div>
<svg class="a" style="left:59px;top:70px" width="14" height="14"><rect x="1.5" y="0.5" width="12" height="11" fill="#fff" stroke="#333"/><rect x="3" y="2" width="9" height="8" fill="#eeeef2"/><rect x="0.5" y="6.5" width="6" height="7" fill="#fff" stroke="#333"/><path d="M2.2 8.6Q3.6 8.0 4.4 8.7V12.2M4.4 10.2Q2.2 9.9 2.2 11.2Q2.4 12.4 4.4 11.6" stroke="#444" stroke-width="0.8" fill="none"/></svg>
<div class="a t" style="left:80.8px;top:69.84px;line-height:16px;color:#000;transform:scaleX(0.9137);transform-origin:0 0;">02 TypeDef (3000)</div>
<div class="a" style="left:47px;top:94px;width:10px;height:1px;background:#d4d4d4;"></div>
<svg class="a" style="left:59px;top:87px" width="14" height="14"><rect x="1.5" y="0.5" width="12" height="11" fill="#fff" stroke="#333"/><rect x="3" y="2" width="9" height="8" fill="#eeeef2"/><rect x="0.5" y="6.5" width="6" height="7" fill="#fff" stroke="#333"/><path d="M2.2 8.6Q3.6 8.0 4.4 8.7V12.2M4.4 10.2Q2.2 9.9 2.2 11.2Q2.4 12.4 4.4 11.6" stroke="#444" stroke-width="0.8" fill="none"/></svg>
<div class="a t" style="left:80.8px;top:86.84px;line-height:16px;color:#000;transform:scaleX(0.9110);transform-origin:0 0;">04 Field (20206)</div>
<div class="a" style="left:47px;top:111px;width:10px;height:1px;background:#d4d4d4;"></div>
<svg class="a" style="left:59px;top:104px" width="14" height="14"><rect x="1.5" y="0.5" width="12" height="11" fill="#fff" stroke="#333"/><rect x="3" y="2" width="9" height="8" fill="#eeeef2"/><rect x="0.5" y="6.5" width="6" height="7" fill="#fff" stroke="#333"/><path d="M2.2 8.6Q3.6 8.0 4.4 8.7V12.2M4.4 10.2Q2.2 9.9 2.2 11.2Q2.4 12.4 4.4 11.6" stroke="#444" stroke-width="0.8" fill="none"/></svg>
<div class="a t" style="left:80.8px;top:103.84px;line-height:16px;color:#000;transform:scaleX(0.9509);transform-origin:0 0;">06 Method (37325)</div>
<div class="a" style="left:47px;top:128px;width:10px;height:1px;background:#d4d4d4;"></div>
<svg class="a" style="left:59px;top:121px" width="14" height="14"><rect x="1.5" y="0.5" width="12" height="11" fill="#fff" stroke="#333"/><rect x="3" y="2" width="9" height="8" fill="#eeeef2"/><rect x="0.5" y="6.5" width="6" height="7" fill="#fff" stroke="#333"/><path d="M2.2 8.6Q3.6 8.0 4.4 8.7V12.2M4.4 10.2Q2.2 9.9 2.2 11.2Q2.4 12.4 4.4 11.6" stroke="#444" stroke-width="0.8" fill="none"/></svg>
<div class="a t" style="left:80.8px;top:120.84px;line-height:16px;color:#000;transform:scaleX(0.9172);transform-origin:0 0;">08 Param (40285)</div>
<div class="a" style="left:47px;top:145px;width:10px;height:1px;background:#d4d4d4;"></div>
<svg class="a" style="left:59px;top:138px" width="14" height="14"><rect x="1.5" y="0.5" width="12" height="11" fill="#fff" stroke="#333"/><rect x="3" y="2" width="9" height="8" fill="#eeeef2"/><rect x="0.5" y="6.5" width="6" height="7" fill="#fff" stroke="#333"/><path d="M2.2 8.6Q3.6 8.0 4.4 8.7V12.2M4.4 10.2Q2.2 9.9 2.2 11.2Q2.4 12.4 4.4 11.6" stroke="#444" stroke-width="0.8" fill="none"/></svg>
<div class="a t" style="left:80.8px;top:137.84px;line-height:16px;color:#000;transform:scaleX(0.9620);transform-origin:0 0;">09 InterfaceImpl (949)</div>
<div class="a" style="left:47px;top:162px;width:10px;height:1px;background:#d4d4d4;"></div>
<svg class="a" style="left:59px;top:155px" width="14" height="14"><rect x="1.5" y="0.5" width="12" height="11" fill="#fff" stroke="#333"/><rect x="3" y="2" width="9" height="8" fill="#eeeef2"/><rect x="0.5" y="6.5" width="6" height="7" fill="#fff" stroke="#333"/><path d="M2.2 8.6Q3.6 8.0 4.4 8.7V12.2M4.4 10.2Q2.2 9.9 2.2 11.2Q2.4 12.4 4.4 11.6" stroke="#444" stroke-width="0.8" fill="none"/></svg>
<div class="a t" style="left:80.8px;top:154.84px;line-height:16px;color:#000;transform:scaleX(0.9564);transform-origin:0 0;">0A MemberRef (9136)</div>
<div class="a" style="left:47px;top:179px;width:10px;height:1px;background:#d4d4d4;"></div>
<svg class="a" style="left:59px;top:172px" width="14" height="14"><rect x="1.5" y="0.5" width="12" height="11" fill="#fff" stroke="#333"/><rect x="3" y="2" width="9" height="8" fill="#eeeef2"/><rect x="0.5" y="6.5" width="6" height="7" fill="#fff" stroke="#333"/><path d="M2.2 8.6Q3.6 8.0 4.4 8.7V12.2M4.4 10.2Q2.2 9.9 2.2 11.2Q2.4 12.4 4.4 11.6" stroke="#444" stroke-width="0.8" fill="none"/></svg>
<div class="a t" style="left:80.8px;top:171.84px;line-height:16px;color:#000;transform:scaleX(0.9411);transform-origin:0 0;">0B Constant (8295)</div>
<div class="a" style="left:47px;top:196px;width:10px;height:1px;background:#d4d4d4;"></div>
<svg class="a" style="left:59px;top:189px" width="14" height="14"><rect x="1.5" y="0.5" width="12" height="11" fill="#fff" stroke="#333"/><rect x="3" y="2" width="9" height="8" fill="#eeeef2"/><rect x="0.5" y="6.5" width="6" height="7" fill="#fff" stroke="#333"/><path d="M2.2 8.6Q3.6 8.0 4.4 8.7V12.2M4.4 10.2Q2.2 9.9 2.2 11.2Q2.4 12.4 4.4 11.6" stroke="#444" stroke-width="0.8" fill="none"/></svg>
<div class="a t" style="left:80.8px;top:188.84px;line-height:16px;color:#000;transform:scaleX(0.9825);transform-origin:0 0;">0C CustomAttribute (7015)</div>
<div class="a" style="left:47px;top:213px;width:10px;height:1px;background:#d4d4d4;"></div>
<svg class="a" style="left:59px;top:206px" width="14" height="14"><rect x="1.5" y="0.5" width="12" height="11" fill="#fff" stroke="#333"/><rect x="3" y="2" width="9" height="8" fill="#eeeef2"/><rect x="0.5" y="6.5" width="6" height="7" fill="#fff" stroke="#333"/><path d="M2.2 8.6Q3.6 8.0 4.4 8.7V12.2M4.4 10.2Q2.2 9.9 2.2 11.2Q2.4 12.4 4.4 11.6" stroke="#444" stroke-width="0.8" fill="none"/></svg>
<div class="a t" style="left:80.8px;top:205.84px;line-height:16px;color:#000;transform:scaleX(0.9434);transform-origin:0 0;">0D FieldMarshal (384)</div>
<div class="a" style="left:47px;top:230px;width:10px;height:1px;background:#d4d4d4;"></div>
<svg class="a" style="left:59px;top:223px" width="14" height="14"><rect x="1.5" y="0.5" width="12" height="11" fill="#fff" stroke="#333"/><rect x="3" y="2" width="9" height="8" fill="#eeeef2"/><rect x="0.5" y="6.5" width="6" height="7" fill="#fff" stroke="#333"/><path d="M2.2 8.6Q3.6 8.0 4.4 8.7V12.2M4.4 10.2Q2.2 9.9 2.2 11.2Q2.4 12.4 4.4 11.6" stroke="#444" stroke-width="0.8" fill="none"/></svg>
<div class="a t" style="left:80.8px;top:222.84px;line-height:16px;color:#000;transform:scaleX(0.9243);transform-origin:0 0;">0E DeclSecurity (58)</div>
<div class="a" style="left:47px;top:247px;width:10px;height:1px;background:#d4d4d4;"></div>
<svg class="a" style="left:59px;top:240px" width="14" height="14"><rect x="1.5" y="0.5" width="12" height="11" fill="#fff" stroke="#333"/><rect x="3" y="2" width="9" height="8" fill="#eeeef2"/><rect x="0.5" y="6.5" width="6" height="7" fill="#fff" stroke="#333"/><path d="M2.2 8.6Q3.6 8.0 4.4 8.7V12.2M4.4 10.2Q2.2 9.9 2.2 11.2Q2.4 12.4 4.4 11.6" stroke="#444" stroke-width="0.8" fill="none"/></svg>
<div class="a t" style="left:80.8px;top:239.84px;line-height:16px;color:#000;transform:scaleX(0.9238);transform-origin:0 0;">0F ClassLayout (35)</div>
<div class="a" style="left:47px;top:264px;width:10px;height:1px;background:#d4d4d4;"></div>
<svg class="a" style="left:59px;top:257px" width="14" height="14"><rect x="1.5" y="0.5" width="12" height="11" fill="#fff" stroke="#333"/><rect x="3" y="2" width="9" height="8" fill="#eeeef2"/><rect x="0.5" y="6.5" width="6" height="7" fill="#fff" stroke="#333"/><path d="M2.2 8.6Q3.6 8.0 4.4 8.7V12.2M4.4 10.2Q2.2 9.9 2.2 11.2Q2.4 12.4 4.4 11.6" stroke="#444" stroke-width="0.8" fill="none"/></svg>
<div class="a t" style="left:80.8px;top:256.84px;line-height:16px;color:#000;transform:scaleX(0.9470);transform-origin:0 0;">10 FieldLayout (14)</div>
<div class="a" style="left:47px;top:281px;width:10px;height:1px;background:#d4d4d4;"></div>
<svg class="a" style="left:59px;top:274px" width="14" height="14"><rect x="1.5" y="0.5" width="12" height="11" fill="#fff" stroke="#333"/><rect x="3" y="2" width="9" height="8" fill="#eeeef2"/><rect x="0.5" y="6.5" width="6" height="7" fill="#fff" stroke="#333"/><path d="M2.2 8.6Q3.6 8.0 4.4 8.7V12.2M4.4 10.2Q2.2 9.9 2.2 11.2Q2.4 12.4 4.4 11.6" stroke="#444" stroke-width="0.8" fill="none"/></svg>
<div class="a t" style="left:80.8px;top:273.84px;line-height:16px;color:#000;transform:scaleX(0.9454);transform-origin:0 0;">11 StandAloneSig (6002)</div>
<div class="a" style="left:47px;top:298px;width:10px;height:1px;background:#d4d4d4;"></div>
<svg class="a" style="left:59px;top:291px" width="14" height="14"><rect x="1.5" y="0.5" width="12" height="11" fill="#fff" stroke="#333"/><rect x="3" y="2" width="9" height="8" fill="#eeeef2"/><rect x="0.5" y="6.5" width="6" height="7" fill="#fff" stroke="#333"/><path d="M2.2 8.6Q3.6 8.0 4.4 8.7V12.2M4.4 10.2Q2.2 9.9 2.2 11.2Q2.4 12.4 4.4 11.6" stroke="#444" stroke-width="0.8" fill="none"/></svg>
<div class="a t" style="left:80.8px;top:290.84px;line-height:16px;color:#000;transform:scaleX(0.9409);transform-origin:0 0;">12 EventMap (122)</div>
<div class="a" style="left:47px;top:315px;width:10px;height:1px;background:#d4d4d4;"></div>
<svg class="a" style="left:59px;top:308px" width="14" height="14"><rect x="1.5" y="0.5" width="12" height="11" fill="#fff" stroke="#333"/><rect x="3" y="2" width="9" height="8" fill="#eeeef2"/><rect x="0.5" y="6.5" width="6" height="7" fill="#fff" stroke="#333"/><path d="M2.2 8.6Q3.6 8.0 4.4 8.7V12.2M4.4 10.2Q2.2 9.9 2.2 11.2Q2.4 12.4 4.4 11.6" stroke="#444" stroke-width="0.8" fill="none"/></svg>
<div class="a t" style="left:80.8px;top:307.84px;line-height:16px;color:#000;transform:scaleX(0.9099);transform-origin:0 0;">14 Event (366)</div>
<div class="a" style="left:47px;top:332px;width:10px;height:1px;background:#d4d4d4;"></div>
<svg class="a" style="left:59px;top:325px" width="14" height="14"><rect x="1.5" y="0.5" width="12" height="11" fill="#fff" stroke="#333"/><rect x="3" y="2" width="9" height="8" fill="#eeeef2"/><rect x="0.5" y="6.5" width="6" height="7" fill="#fff" stroke="#333"/><path d="M2.2 8.6Q3.6 8.0 4.4 8.7V12.2M4.4 10.2Q2.2 9.9 2.2 11.2Q2.4 12.4 4.4 11.6" stroke="#444" stroke-width="0.8" fill="none"/></svg>
<div class="a t" style="left:80.8px;top:324.84px;line-height:16px;color:#000;transform:scaleX(0.9540);transform-origin:0 0;">15 PropertyMap (1333)</div>
<div class="a" style="left:47px;top:349px;width:10px;height:1px;background:#d4d4d4;"></div>
<svg class="a" style="left:59px;top:342px" width="14" height="14"><rect x="1.5" y="0.5" width="12" height="11" fill="#fff" stroke="#333"/><rect x="3" y="2" width="9" height="8" fill="#eeeef2"/><rect x="0.5" y="6.5" width="6" height="7" fill="#fff" stroke="#333"/><path d="M2.2 8.6Q3.6 8.0 4.4 8.7V12.2M4.4 10.2Q2.2 9.9 2.2 11.2Q2.4 12.4 4.4 11.6" stroke="#444" stroke-width="0.8" fill="none"/></svg>
<div class="a t" style="left:80.8px;top:341.84px;line-height:16px;color:#000;transform:scaleX(0.9347);transform-origin:0 0;">17 Property (8137)</div>
<div class="a" style="left:47px;top:366px;width:10px;height:1px;background:#d4d4d4;"></div>
<svg class="a" style="left:59px;top:359px" width="14" height="14"><rect x="1.5" y="0.5" width="12" height="11" fill="#fff" stroke="#333"/><rect x="3" y="2" width="9" height="8" fill="#eeeef2"/><rect x="0.5" y="6.5" width="6" height="7" fill="#fff" stroke="#333"/><path d="M2.2 8.6Q3.6 8.0 4.4 8.7V12.2M4.4 10.2Q2.2 9.9 2.2 11.2Q2.4 12.4 4.4 11.6" stroke="#444" stroke-width="0.8" fill="none"/></svg>
<div class="a t" style="left:80.8px;top:358.84px;line-height:16px;color:#000;transform:scaleX(0.9661);transform-origin:0 0;">18 MethodSemantics (11763)</div>
<div class="a" style="left:47px;top:383px;width:10px;height:1px;background:#d4d4d4;"></div>
<svg class="a" style="left:59px;top:376px" width="14" height="14"><rect x="1.5" y="0.5" width="12" height="11" fill="#fff" stroke="#333"/><rect x="3" y="2" width="9" height="8" fill="#eeeef2"/><rect x="0.5" y="6.5" width="6" height="7" fill="#fff" stroke="#333"/><path d="M2.2 8.6Q3.6 8.0 4.4 8.7V12.2M4.4 10.2Q2.2 9.9 2.2 11.2Q2.4 12.4 4.4 11.6" stroke="#444" stroke-width="0.8" fill="none"/></svg>
<div class="a" style="left:79px;top:375px;width:124px;height:16px;background:#0078d7;"></div>
<div class="a t" style="left:80.8px;top:375.84px;line-height:16px;color:#fff;transform:scaleX(0.9755);transform-origin:0 0;">19 MethodImpl (2120)</div>
<div class="a" style="left:47px;top:400px;width:10px;height:1px;background:#d4d4d4;"></div>
<svg class="a" style="left:59px;top:393px" width="14" height="14"><rect x="1.5" y="0.5" width="12" height="11" fill="#fff" stroke="#333"/><rect x="3" y="2" width="9" height="8" fill="#eeeef2"/><rect x="0.5" y="6.5" width="6" height="7" fill="#fff" stroke="#333"/><path d="M2.2 8.6Q3.6 8.0 4.4 8.7V12.2M4.4 10.2Q2.2 9.9 2.2 11.2Q2.4 12.4 4.4 11.6" stroke="#444" stroke-width="0.8" fill="none"/></svg>
<div class="a t" style="left:80.8px;top:392.84px;line-height:16px;color:#000;transform:scaleX(0.9635);transform-origin:0 0;">1A ModuleRef (10)</div>
<div class="a" style="left:47px;top:417px;width:10px;height:1px;background:#d4d4d4;"></div>
<svg class="a" style="left:59px;top:410px" width="14" height="14"><rect x="1.5" y="0.5" width="12" height="11" fill="#fff" stroke="#333"/><rect x="3" y="2" width="9" height="8" fill="#eeeef2"/><rect x="0.5" y="6.5" width="6" height="7" fill="#fff" stroke="#333"/><path d="M2.2 8.6Q3.6 8.0 4.4 8.7V12.2M4.4 10.2Q2.2 9.9 2.2 11.2Q2.4 12.4 4.4 11.6" stroke="#444" stroke-width="0.8" fill="none"/></svg>
<div class="a t" style="left:80.8px;top:409.84px;line-height:16px;color:#000;transform:scaleX(0.9080);transform-origin:0 0;">1B TypeSpec (1136)</div>
<div class="a" style="left:47px;top:434px;width:10px;height:1px;background:#d4d4d4;"></div>
<svg class="a" style="left:59px;top:427px" width="14" height="14"><rect x="1.5" y="0.5" width="12" height="11" fill="#fff" stroke="#333"/><rect x="3" y="2" width="9" height="8" fill="#eeeef2"/><rect x="0.5" y="6.5" width="6" height="7" fill="#fff" stroke="#333"/><path d="M2.2 8.6Q3.6 8.0 4.4 8.7V12.2M4.4 10.2Q2.2 9.9 2.2 11.2Q2.4 12.4 4.4 11.6" stroke="#444" stroke-width="0.8" fill="none"/></svg>
<div class="a t" style="left:80.8px;top:426.84px;line-height:16px;color:#000;transform:scaleX(0.9632);transform-origin:0 0;">1C ImplMap (192)</div>
<div class="a" style="left:47px;top:451px;width:10px;height:1px;background:#d4d4d4;"></div>
<svg class="a" style="left:59px;top:444px" width="14" height="14"><rect x="1.5" y="0.5" width="12" height="11" fill="#fff" stroke="#333"/><rect x="3" y="2" width="9" height="8" fill="#eeeef2"/><rect x="0.5" y="6.5" width="6" height="7" fill="#fff" stroke="#333"/><path d="M2.2 8.6Q3.6 8.0 4.4 8.7V12.2M4.4 10.2Q2.2 9.9 2.2 11.2Q2.4 12.4 4.4 11.6" stroke="#444" stroke-width="0.8" fill="none"/></svg>
<div class="a t" style="left:80.8px;top:443.84px;line-height:16px;color:#000;transform:scaleX(0.9158);transform-origin:0 0;">1D FieldRVA (20)</div>
<div class="a" style="left:47px;top:468px;width:10px;height:1px;background:#d4d4d4;"></div>
<svg class="a" style="left:59px;top:461px" width="14" height="14"><rect x="1.5" y="0.5" width="12" height="11" fill="#fff" stroke="#333"/><rect x="3" y="2" width="9" height="8" fill="#eeeef2"/><rect x="0.5" y="6.5" width="6" height="7" fill="#fff" stroke="#333"/><path d="M2.2 8.6Q3.6 8.0 4.4 8.7V12.2M4.4 10.2Q2.2 9.9 2.2 11.2Q2.4 12.4 4.4 11.6" stroke="#444" stroke-width="0.8" fill="none"/></svg>
<div class="a t" style="left:80.8px;top:460.84px;line-height:16px;color:#000;transform:scaleX(0.9543);transform-origin:0 0;">20 Assembly (1)</div>
<div class="a" style="left:47px;top:485px;width:10px;height:1px;background:#d4d4d4;"></div>
<svg class="a" style="left:59px;top:478px" width="14" height="14"><rect x="1.5" y="0.5" width="12" height="11" fill="#fff" stroke="#333"/><rect x="3" y="2" width="9" height="8" fill="#eeeef2"/><rect x="0.5" y="6.5" width="6" height="7" fill="#fff" stroke="#333"/><path d="M2.2 8.6Q3.6 8.0 4.4 8.7V12.2M4.4 10.2Q2.2 9.9 2.2 11.2Q2.4 12.4 4.4 11.6" stroke="#444" stroke-width="0.8" fill="none"/></svg>
<div class="a t" style="left:80.8px;top:477.84px;line-height:16px;color:#000;transform:scaleX(0.9356);transform-origin:0 0;">23 AssemblyRef (15)</div>
<div class="a" style="left:47px;top:502px;width:10px;height:1px;background:#d4d4d4;"></div>
<svg class="a" style="left:59px;top:495px" width="14" height="14"><rect x="1.5" y="0.5" width="12" height="11" fill="#fff" stroke="#333"/><rect x="3" y="2" width="9" height="8" fill="#eeeef2"/><rect x="0.5" y="6.5" width="6" height="7" fill="#fff" stroke="#333"/><path d="M2.2 8.6Q3.6 8.0 4.4 8.7V12.2M4.4 10.2Q2.2 9.9 2.2 11.2Q2.4 12.4 4.4 11.6" stroke="#444" stroke-width="0.8" fill="none"/></svg>
<div class="a t" style="left:80.8px;top:494.84px;line-height:16px;color:#000;transform:scaleX(0.9071);transform-origin:0 0;">26 File (0)</div>
</div>
<div class="a" style="left:279px;top:105px;width:17px;height:500px;background:#f0f0f0;"></div>
<div class="a" style="left:279px;top:174px;width:17px;height:108px;background:#cdcdcd;"></div>
<svg class="a" style="left:284px;top:110px" width="9" height="7"><path d="M1 5.5L4.5 1.5L8 5.5" stroke="#a3a3a3" stroke-width="1.1" fill="none"/></svg>
<svg class="a" style="left:284px;top:593px" width="9" height="7"><path d="M1 1.5L4.5 5.5L8 1.5" stroke="#a3a3a3" stroke-width="1.1" fill="none"/></svg>
<div class="a" style="left:5px;top:605px;width:291px;height:17px;background:#f0f0f0;"></div>
<div class="a" style="left:22px;top:605px;width:223px;height:17px;background:#cdcdcd;"></div>
<svg class="a" style="left:10px;top:609px" width="7" height="9"><path d="M5.5 1L1.5 4.5L5.5 8" stroke="#a3a3a3" stroke-width="1.1" fill="none"/></svg>
<svg class="a" style="left:267px;top:609px" width="7" height="9"><path d="M1.5 1L5.5 4.5L1.5 8" stroke="#a3a3a3" stroke-width="1.1" fill="none"/></svg>
<svg class="a" style="left:266px;top:91px" width="9" height="5"><path d="M0 0H8.4L4.2 4.5Z" fill="#000"/></svg>
<svg class="a" style="left:284px;top:88px" width="9" height="12"><path d="M2 1H7V7H8V8H1V7H2Z M3 2V7H5V2Z M4 8V12" fill="#000" stroke="none"/><rect x="4" y="8" width="1" height="3" fill="#000"/></svg>
<svg class="a" style="left:1160px;top:89px" width="9" height="8"><rect x="0" y="0" width="9" height="2" fill="#000"/><path d="M0.2 3.2H8.6L4.4 7.6Z" fill="#000"/></svg>
<svg class="a" style="left:1163px;top:71px" width="7" height="6"><rect x="0" y="0" width="7" height="1" fill="#777"/><path d="M0 2.5H7L3.5 6Z" fill="#777"/></svg>
<div class="a" style="left:0px;top:0px;width:1174px;height:1px;background:#30536b;"></div>
<div class="a" style="left:0px;top:0px;width:1px;height:630px;background:#30536b;"></div>
<div class="a" style="left:1173px;top:0px;width:1px;height:630px;background:#30536b;"></div>
<div class="a" style="left:0px;top:629px;width:1174px;height:1px;background:#30536b;"></div>
</body></html>
